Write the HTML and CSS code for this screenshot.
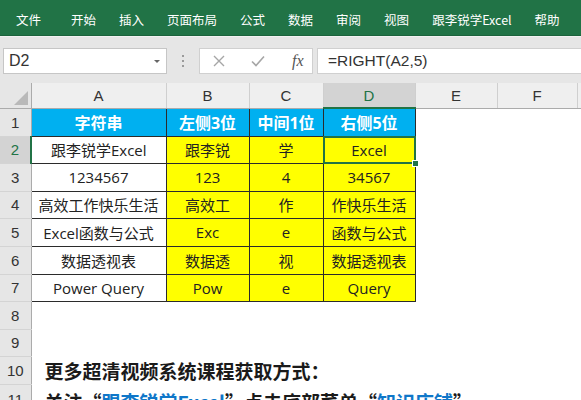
FILE: index.html
```html
<!DOCTYPE html>
<html lang="zh">
<head>
<meta charset="utf-8">
<title>Excel RIGHT</title>
<link rel="stylesheet" href="styles.css">
</head>
<body>
<div class="app">
  <nav class="ribbon">
    <span class="tab first">文件</span>
    <span class="tab">开始</span>
    <span class="tab">插入</span>
    <span class="tab">页面布局</span>
    <span class="tab">公式</span>
    <span class="tab">数据</span>
    <span class="tab">审阅</span>
    <span class="tab">视图</span>
    <span class="tab">跟李锐学Excel</span>
    <span class="tab">帮助</span>
  </nav>
  <div class="fbar">
    <div class="namebox">
      <span class="nb-text">D2</span>
      <svg class="nb-arrow" width="8" height="5" viewBox="0 0 8 5"><path d="M1 1h6L4 4z" fill="#666"/></svg>
    </div>
    <div class="dots"><i></i><i></i><i></i></div>
    <div class="fbtns">
      <svg class="ico" width="14" height="14" viewBox="0 0 14 14"><path d="M2 2L12 12M12 2L2 12" stroke="#a6a6a6" stroke-width="1.4" fill="none"/></svg>
      <svg class="ico" width="16" height="14" viewBox="0 0 16 14"><path d="M2 7.5L6 11.5L14 2.5" stroke="#a6a6a6" stroke-width="1.6" fill="none"/></svg>
      <span class="fx">fx</span>
    </div>
    <div class="finput">=RIGHT(A2,5)</div>
  </div>
  <table class="sheet">
    <colgroup>
      <col class="c-rh"><col class="c-a"><col class="c-b"><col class="c-c"><col class="c-d"><col class="c-e"><col class="c-f"><col class="c-g">
    </colgroup>
    <thead>
      <tr class="hdr">
        <th class="corner"><span class="tri"></span></th>
        <th>A</th><th>B</th><th>C</th><th class="sel">D</th><th>E</th><th>F</th><th></th>
      </tr>
    </thead>
    <tbody>
      <tr class="r28">
        <th class="rh">1</th>
        <td class="d h">字符串</td><td class="d h">左侧3位</td><td class="d h">中间1位</td><td class="d h">右侧5位</td><td></td><td></td><td></td>
      </tr>
      <tr class="r27">
        <th class="rh rsel">2</th>
        <td class="d">跟李锐学Excel</td><td class="d y">跟李锐</td><td class="d y">学</td><td class="d y active">Excel</td><td></td><td></td><td></td>
      </tr>
      <tr class="r28">
        <th class="rh">3</th>
        <td class="d">1234567</td><td class="d y">123</td><td class="d y">4</td><td class="d y">34567</td><td></td><td></td><td></td>
      </tr>
      <tr class="r27">
        <th class="rh">4</th>
        <td class="d">高效工作快乐生活</td><td class="d y">高效工</td><td class="d y">作</td><td class="d y">作快乐生活</td><td></td><td></td><td></td>
      </tr>
      <tr class="r28">
        <th class="rh">5</th>
        <td class="d">Excel函数与公式</td><td class="d y">Exc</td><td class="d y">e</td><td class="d y">函数与公式</td><td></td><td></td><td></td>
      </tr>
      <tr class="r28">
        <th class="rh">6</th>
        <td class="d">数据透视表</td><td class="d y">数据透</td><td class="d y">视</td><td class="d y">数据透视表</td><td></td><td></td><td></td>
      </tr>
      <tr class="r27">
        <th class="rh">7</th>
        <td class="d">Power Query</td><td class="d y">Pow</td><td class="d y">e</td><td class="d y">Query</td><td></td><td></td><td></td>
      </tr>
      <tr class="r28">
        <th class="rh">8</th><td></td><td></td><td></td><td></td><td></td><td></td><td></td>
      </tr>
      <tr class="r27">
        <th class="rh">9</th><td></td><td></td><td></td><td></td><td></td><td></td><td></td>
      </tr>
      <tr class="r28">
        <th class="rh">10</th>
        <td class="note" colspan="7">更多超清视频系统课程获取方式：</td>
      </tr>
      <tr class="r28">
        <th class="rh">11</th>
        <td class="note low" colspan="7">关注“<span class="blue">跟李锐学Excel</span>”点击底部菜单“<span class="blue">知识店铺</span>”</td>
      </tr>
    </tbody>
  </table>
</div>
</body>
</html>
```
FILE: styles.css
```css
html, body {
  margin: 0;
  padding: 0;
  background: #ffffff;
}
.app {
  width: 581px;
  height: 400px;
  overflow: hidden;
  font-family: "Open Sans", "Noto Sans CJK SC", sans-serif;
}
.ribbon {
  height: 36px;
  background: #217346;
  display: flex;
  align-items: center;
  padding-top: 4px;
  box-sizing: border-box;
  border-bottom: 1px solid #1c633c;
  font-family: "Noto Sans CJK SC", sans-serif;
}
.tab {
  color: #ffffff;
  font-size: 12.5px;
  line-height: 16px;
  margin-right: 23px;
  white-space: nowrap;
}
.tab.first {
  margin-left: 16px;
  margin-right: 30px;
}
.fbar {
  height: 47px;
  background: #e6e6e6;
  border-top: 1px solid #f2f2f2;
  box-sizing: border-box;
  display: flex;
  align-items: flex-start;
  padding-top: 11px;
  padding-left: 3px;
}
.namebox {
  width: 164px;
  height: 26px;
  box-sizing: border-box;
  background: #ffffff;
  border: 1px solid #c6c6c6;
  display: flex;
  align-items: center;
  justify-content: space-between;
  padding: 0 5px 0 5px;
}
.nb-text {
  font-family: "Liberation Sans", Arial, sans-serif;
  font-size: 16px;
  color: #333;
}
.nb-arrow {
  display: block;
}
.dots {
  width: 32px;
  height: 26px;
  display: flex;
  flex-direction: column;
  align-items: center;
  justify-content: center;
  gap: 3px;
}
.dots i {
  display: block;
  width: 2px;
  height: 2px;
  background: #9a9a9a;
}
.fbtns {
  width: 114px;
  height: 26px;
  box-sizing: border-box;
  background: #ffffff;
  border: 1px solid #d0d0d0;
  display: flex;
  align-items: center;
  padding-left: 12px;
}
.ico {
  display: block;
  margin-right: 24px;
}
.fx {
  font-family: "Liberation Serif", "Times New Roman", serif;
  font-style: italic;
  font-size: 16px;
  color: #555;
  margin-left: 2px;
}
.finput {
  margin-left: 4px;
  flex: 1;
  height: 26px;
  box-sizing: border-box;
  background: #ffffff;
  border: 1px solid #d0d0d0;
  border-right: none;
  font-family: "Liberation Sans", Arial, sans-serif;
  font-size: 15.5px;
  line-height: 24px;
  color: #333;
  padding-left: 10px;
}
.sheet {
  border-collapse: collapse;
  table-layout: fixed;
  width: 581px;
}
.c-rh { width: 31px; }
.c-a { width: 135px; }
.c-b { width: 83px; }
.c-c { width: 74px; }
.c-d { width: 92px; }
.c-e { width: 82px; }
.c-f { width: 80px; }
.c-g { width: 4px; }
.sheet th, .sheet td {
  padding: 0;
  overflow: hidden;
  white-space: nowrap;
}
.hdr th {
  height: 24px;
  background: #efefef;
  border-right: 1px solid #cfcfcf;
  border-bottom: 1px solid #ababab;
  font-family: "Liberation Sans", Arial, sans-serif;
  font-weight: normal;
  font-size: 15px;
  color: #333;
  text-align: center;
  vertical-align: middle;
}
.hdr th.sel {
  background: #d3d3d3;
  color: #217346;
  border-bottom: 2px solid #217346;
}
.hdr th.corner {
  position: relative;
  background: #e6e6e6;
  border-right: 1px solid #ababab;
}
.tri {
  position: absolute;
  right: 3px;
  bottom: 3px;
  width: 0;
  height: 0;
  border-left: 14px solid transparent;
  border-bottom: 14px solid #b9b9b9;
}
.r28 { height: 28px; }
.r27 { height: 27px; }
.rh {
  background: #e6e6e6;
  border-right: 1px solid #ababab;
  border-bottom: 1px solid #d4d4d4;
  font-family: "Liberation Sans", Arial, sans-serif;
  font-weight: normal;
  font-size: 15px;
  color: #333;
  text-align: center;
  vertical-align: middle;
}
.rh.rsel {
  background: #d3d3d3;
  color: #217346;
  border-right: 2px solid #217346;
}
.d {
  border: 1px solid #2b2b2b;
  font-size: 15px;
  color: #222;
  text-align: center;
  vertical-align: middle;
  background: #ffffff;
}
.d.h {
  background: #00b0f0;
  color: #ffffff;
  font-weight: bold;
  font-size: 16px;
}
.d.y {
  background: #ffff00;
}
.d.active {
  position: relative;
  overflow: visible;
}
.d.active::after {
  content: "";
  position: absolute;
  left: -1px;
  top: -1px;
  right: -1px;
  bottom: -1px;
  border: 2px solid #217346;
}
.d.active::before {
  content: "";
  position: absolute;
  right: -4px;
  bottom: -4px;
  width: 5px;
  height: 5px;
  background: #217346;
  border: 1px solid #ffffff;
  z-index: 2;
}
.note {
  font-family: "Noto Sans CJK SC", sans-serif;
  font-size: 19px;
  font-weight: bold;
  color: #1a1a1a;
  text-align: left;
  vertical-align: middle;
  padding-left: 13px !important;
  overflow: visible;
}
.note.low {
  padding-top: 4px !important;
}
.blue {
  color: #0f77c9;
}
```
